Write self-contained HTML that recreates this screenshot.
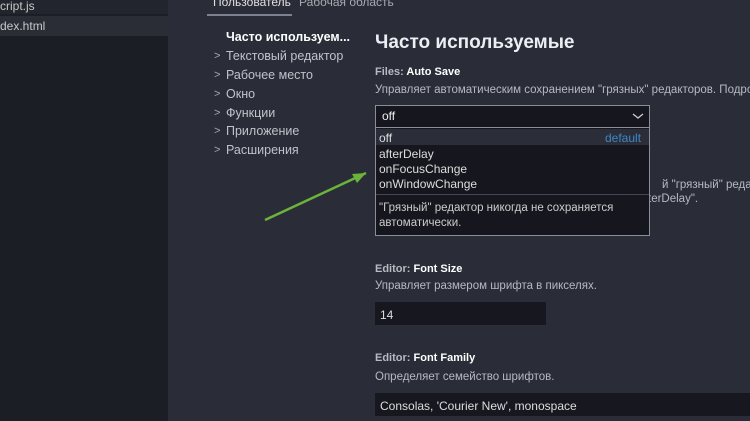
<!DOCTYPE html>
<html><head><meta charset="utf-8"><style>
*{margin:0;padding:0;box-sizing:border-box}
body{width:750px;height:421px;overflow:hidden;background:#2a2d38;font-family:"Liberation Sans","DejaVu Sans",sans-serif;color:#c8cad0;position:relative}
.a{position:absolute;white-space:nowrap}
.side{position:absolute;left:0;top:0;width:168px;height:421px;background:#1c1e25}
.t{font-size:12px}
.nav{font-size:12.5px;color:#c0c2c8}
.nav b{color:#fff}
.chev{position:absolute;left:-12px;top:1px;font-size:11px;color:#aaa}
.desc{font-size:11.5px;color:#b7b9c0}
.lbl{font-size:11px;color:#b8bac2;font-weight:bold}
.lbl span{color:#fff}
.inp{position:absolute;background:#17181f;font-size:12px;color:#ddd;padding:6px 5px}
.it{font-size:12px;color:#ddd}
</style></head><body>
<div class="side">
  <div class="a t" style="left:0;top:-2px;width:168px;height:16px;background:#22252d;color:#c8c8c8;line-height:16px">cript.js</div>
  <div class="a t" style="left:0;top:16px;width:168px;height:20px;background:#2a2d36;color:#c8c8c8;line-height:20px">dex.html</div>
</div>
<div class="a t" style="left:213px;top:-5px;color:#e0e0e0">Пользователь</div>
<div class="a t" style="left:299px;top:-5px;color:#a8aab0">Рабочая область</div>
<div class="a" style="left:207px;top:14px;width:85px;height:2px;background:#7d8190"></div>

<div class="a nav" style="left:226px;top:30px"><b>Часто используем...</b></div>
<div class="a nav" style="left:226px;top:49px"><span class="chev">&gt;</span>Текстовый редактор</div>
<div class="a nav" style="left:226px;top:68px"><span class="chev">&gt;</span>Рабочее место</div>
<div class="a nav" style="left:226px;top:87px"><span class="chev">&gt;</span>Окно</div>
<div class="a nav" style="left:226px;top:106px"><span class="chev">&gt;</span>Функции</div>
<div class="a nav" style="left:226px;top:124px"><span class="chev">&gt;</span>Приложение</div>
<div class="a nav" style="left:226px;top:143px"><span class="chev">&gt;</span>Расширения</div>

<div class="a" style="left:375px;top:32px;font-size:19px;font-weight:bold;color:#eceef2">Часто используемые</div>
<div class="a lbl" style="left:375px;top:66px">Files: <span>Auto Save</span></div>
<div class="a desc" style="left:375px;top:84px">Управляет автоматическим сохранением "грязных" редакторов. Подробн</div>

<div class="a desc" style="left:662px;top:179px">й "грязный" редакт</div>
<div class="a desc" style="left:648px;top:193px">terDelay".</div>

<div class="a" style="left:375px;top:105px;width:275px;height:131px;background:#16171e;border:1px solid #8a8d96"></div>
<div class="a" style="left:376px;top:127px;width:273px;height:1px;background:#8a8d96"></div>
<div class="a" style="left:382px;top:109px;font-size:12px;color:#eee">off</div>
<svg class="a" style="left:632px;top:112px" width="12" height="8"><path d="M1 2l5 4 5-4" stroke="#ccc" stroke-width="1.3" fill="none"/></svg>
<div class="a" style="left:376px;top:129px;width:273px;height:16px;background:#2b2e39"></div>
<div class="a it" style="left:379px;top:131px">off</div>
<div class="a it" style="left:605px;top:131px;color:#3d86c8">default</div>
<div class="a it" style="left:379px;top:147px">afterDelay</div>
<div class="a it" style="left:379px;top:162px">onFocusChange</div>
<div class="a it" style="left:379px;top:177px">onWindowChange</div>
<div class="a" style="left:376px;top:194px;width:273px;height:1px;background:#444752"></div>
<div class="a" style="left:379px;top:201px;font-size:11.5px;color:#ccc;line-height:15px">"Грязный" редактор никогда не сохраняется<br>автоматически.</div>

<svg class="a" style="left:260px;top:165px" width="112" height="60"><path d="M5 55L106 8" stroke="#6cb33a" stroke-width="2.5"/><path d="M106 8l-14 1 5 9z" fill="#6cb33a"/></svg>

<div class="a lbl" style="left:375px;top:263px">Editor: <span>Font Size</span></div>
<div class="a desc" style="left:375px;top:280px">Управляет размером шрифта в пикселях.</div>
<div class="inp" style="left:375px;top:302px;width:171px;height:23px">14</div>

<div class="a lbl" style="left:375px;top:352px">Editor: <span>Font Family</span></div>
<div class="a desc" style="left:375px;top:371px">Определяет семейство шрифтов.</div>
<div class="inp" style="left:375px;top:393px;width:375px;height:23px">Consolas, 'Courier New', monospace</div>
</body></html>
